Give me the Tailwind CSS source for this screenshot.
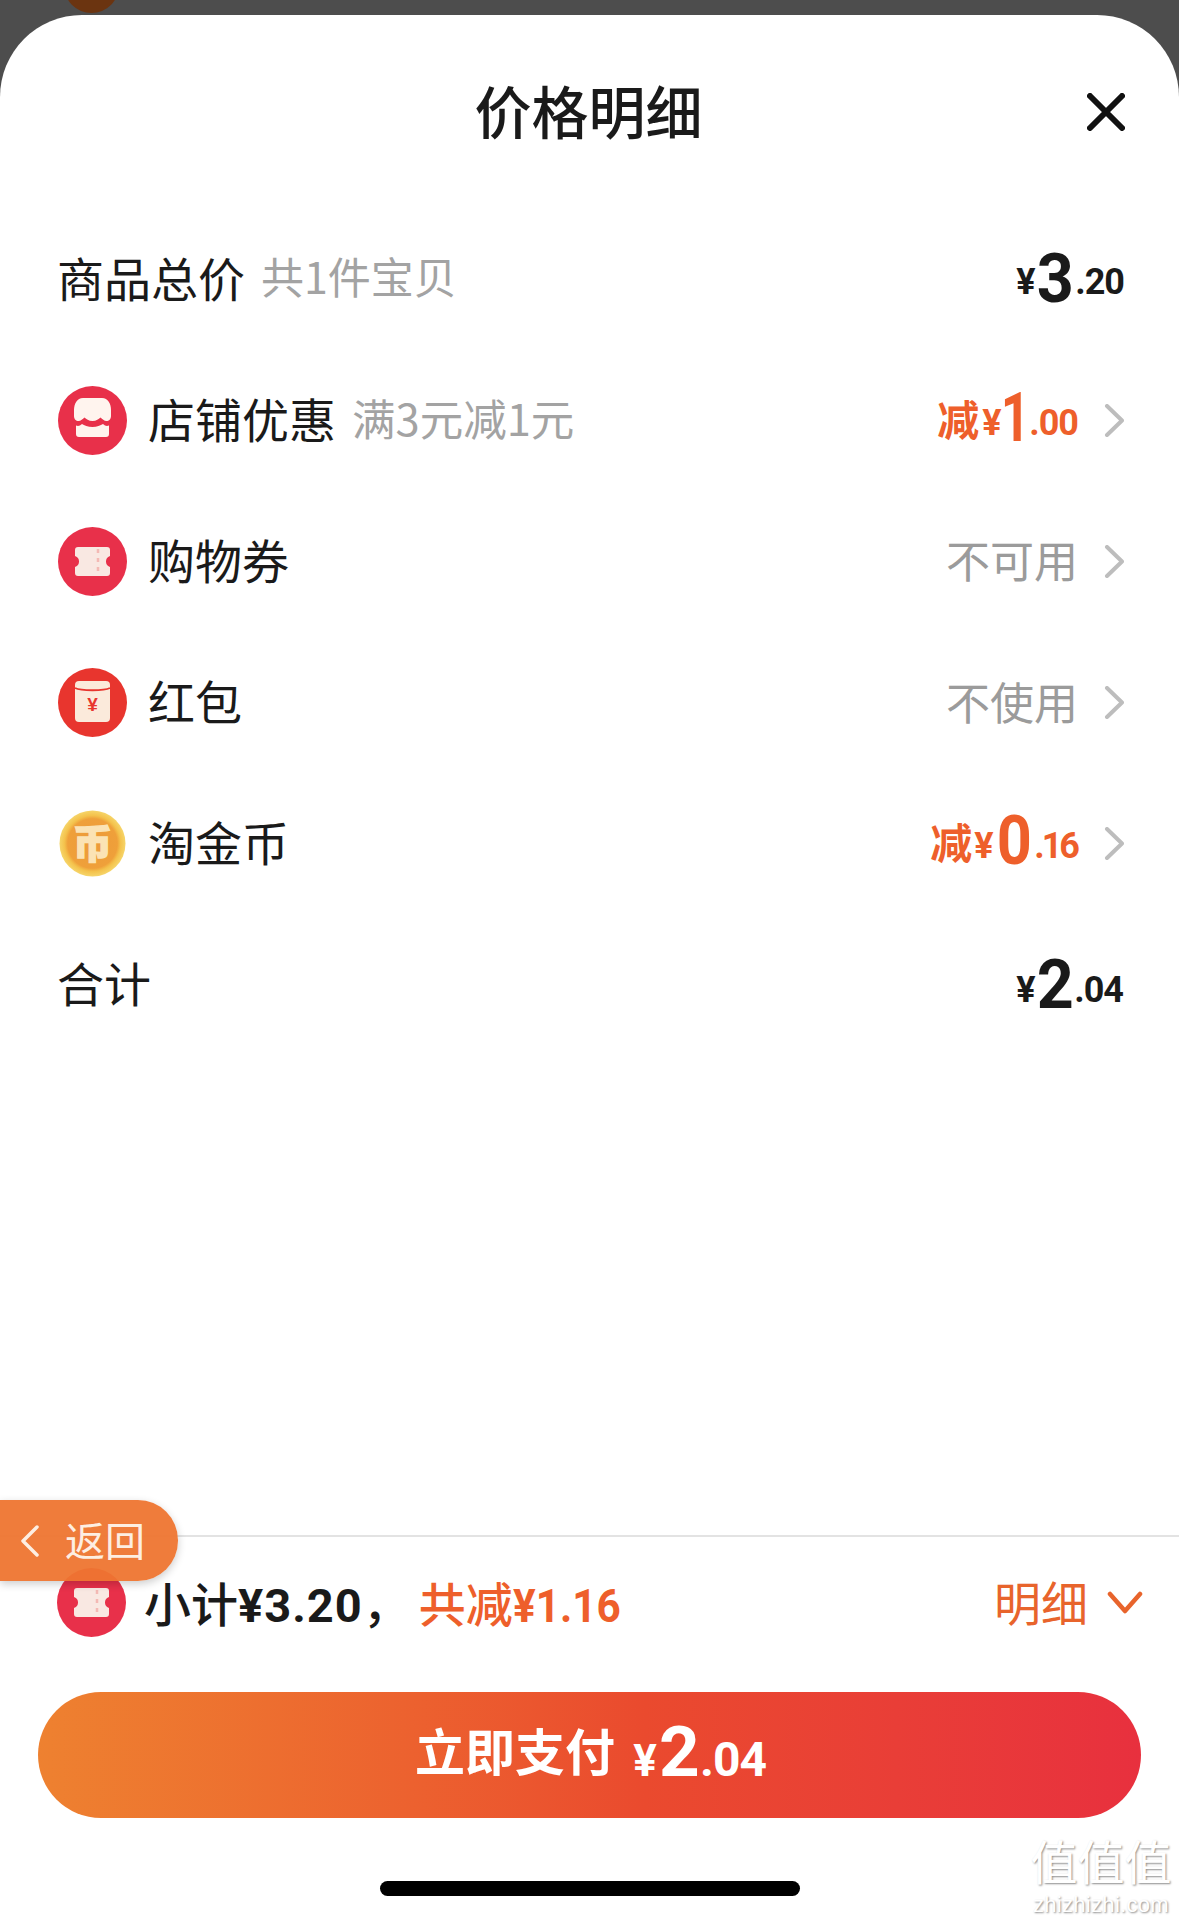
<!DOCTYPE html>
<html lang="zh-CN">
<head>
<meta charset="utf-8">
<script src="https://cdn.jsdelivr.net/npm/@tailwindcss/browser@4"></script>
</head>
<body class="m-0">
<div class="relative w-[1179px] h-[1920px] overflow-hidden bg-[#4d4d4d] font-['Noto_Sans_CJK_SC',sans-serif] text-[#1a1a1a]">
  <div class="absolute left-[64px] top-[-42px] w-[55px] h-[55px] rounded-full bg-[#6b3410]"></div>
  <div class="relative mt-[15px] h-[1905px] rounded-t-[82px] bg-white flex flex-col">
    <!-- header -->
    <header class="h-[194px] grid grid-cols-[1fr_auto_1fr] items-center">
      <div></div>
      <h1 class="text-[57px] leading-none font-medium -translate-y-[3px] -translate-x-[1px]">价格明细</h1>
      <div class="flex justify-end pr-[54px]">
        <svg width="38" height="38" viewBox="0 0 38 38" fill="none" stroke="#111" stroke-width="6" stroke-linecap="round"><path d="M3 3 35 35M35 3 3 35"/></svg>
      </div>
    </header>
    <!-- rows -->
    <section class="flex flex-col px-[58px]">
      <div class="h-[141px] flex items-center justify-between">
        <div class="flex items-center gap-[16px] text-[47px] leading-none -translate-y-[3px] -translate-x-[1px]"><span>商品总价</span><span class="text-[#a3a3a3] text-[43px] -translate-y-[1px]">共1件宝贝</span></div>
        <div class="flex items-baseline mr-[-3px] -translate-y-[1px] font-['Roboto',sans-serif] font-bold leading-none"><span class="w-[19px] text-center text-[36px] -translate-y-[8px]">¥</span><span class="ml-[1px] w-[32px] text-center scale-x-[.95] text-[68px]">3</span><span class="ml-[7px] text-[36px] tracking-[-1px] -translate-y-[8px]">.20</span></div>
      </div>
      <div class="h-[141px] flex items-center justify-between">
        <div class="flex items-center text-[47px] leading-none">
          <svg class="mr-[21px]" width="69" height="69" viewBox="0 0 69 69"><circle cx="34.500" cy="34.500" r="34.500" fill="#e8304a"/><path fill="#fff4ee" d="M25 12h19c6 0 9 6 9 12v6c0 3-2 5-4.500 5s-4-2-6-3.500c-2 1.500-4 3.500-8 3.500s-6-2-8-3.500c-2 1.500-3.500 3.500-6 3.500S16 33 16 30v-6c0-6 3-12 9-12z"/><path fill="#fff4ee" d="M18 39.500c2 1 4 .5 6-1.500 2 1.500 6 3 10.500 3s8-1.500 10.500-3c2 2 4 2.500 6 1.500V48c0 2-1 3-3 3H21c-2 0-3-1-3-3z"/></svg>
          <span class="-translate-y-[3px]">店铺优惠</span><span class="ml-[16px] text-[#a3a3a3] text-[43.5px] -translate-y-[3px]">满3元减1元</span>
        </div>
        <div class="flex items-center mr-[-3px]">
          <div class="flex items-baseline -translate-y-[3px] font-['Roboto',sans-serif] font-bold leading-none text-[#ee5f2b]"><span class="font-['Noto_Sans_CJK_SC',sans-serif] font-bold text-[42px] -translate-y-[5px]">减</span><span class="w-[19px] text-center text-[36px] ml-[3px] -translate-y-[6px]">¥</span><span class="ml-[-3px] w-[22px] text-center scale-x-[.75] text-[68px]">1</span><span class="ml-[9px] text-[36px] tracking-[-1px] -translate-y-[6px]">.00</span></div>
          <svg class="ml-[25px]" width="21" height="33" viewBox="0 0 21 33" fill="none" stroke="#bdbdbd" stroke-width="4" stroke-linecap="round" stroke-linejoin="round"><path d="M4 2 19 16.500 4 31"/></svg>
        </div>
      </div>
      <div class="h-[141px] flex items-center justify-between">
        <div class="flex items-center text-[47px] leading-none">
          <svg class="mr-[21px]" width="69" height="69" viewBox="0 0 69 69"><circle cx="34.500" cy="34.500" r="34.500" fill="#e8304a"/><path fill="#f9e8e2" d="M20 20h29c2 0 3 1 3 3v6c-3 1-4 3-4 5.500s1 4.500 4 5.500v6c0 2-1 3-3 3H20c-2 0-3-1-3-3v-6c3-1 4-3 4-5.500s-1-4.500-4-5.500v-6c0-2 1-3 3-3z"/><path stroke="#f4b9b4" stroke-width="2.500" stroke-dasharray="4 5" d="M40 22v25"/></svg>
          <span class="-translate-y-[3px]">购物券</span>
        </div>
        <div class="flex items-center mr-[-3px]">
          <span class="text-[44px] leading-none text-[#9b9b9b] -translate-y-[3px]">不可用</span>
          <svg class="ml-[25px]" width="21" height="33" viewBox="0 0 21 33" fill="none" stroke="#bdbdbd" stroke-width="4" stroke-linecap="round" stroke-linejoin="round"><path d="M4 2 19 16.500 4 31"/></svg>
        </div>
      </div>
      <div class="h-[141px] flex items-center justify-between">
        <div class="flex items-center text-[47px] leading-none">
          <svg class="mr-[21px]" width="69" height="69" viewBox="0 0 69 69"><circle cx="34.500" cy="34.500" r="34.500" fill="#e8352e"/><rect x="17" y="13" width="35" height="41" rx="4" fill="#fbeadb"/><path d="M17 20c6 3 29 3 35 0" fill="none" stroke="#e8352e" stroke-width="1.800"/><text x="34.500" y="43" text-anchor="middle" font-size="19" font-weight="700" fill="#e8352e" font-family="Liberation Sans">¥</text></svg>
          <span class="-translate-y-[3px]">红包</span>
        </div>
        <div class="flex items-center mr-[-3px]">
          <span class="text-[44px] leading-none text-[#9b9b9b] -translate-y-[2px]">不使用</span>
          <svg class="ml-[25px]" width="21" height="33" viewBox="0 0 21 33" fill="none" stroke="#bdbdbd" stroke-width="4" stroke-linecap="round" stroke-linejoin="round"><path d="M4 2 19 16.500 4 31"/></svg>
        </div>
      </div>
      <div class="h-[141px] flex items-center justify-between">
        <div class="flex items-center text-[47px] leading-none">
          <svg class="mr-[21px]" width="69" height="69" viewBox="0 0 69 69"><defs><radialGradient id="coin"><stop offset="0" stop-color="#ec9a3a"/><stop offset=".75" stop-color="#efa03a"/><stop offset=".85" stop-color="#f4c24c"/><stop offset="1" stop-color="#f6d56a"/></radialGradient></defs><circle cx="34.500" cy="34.500" r="33" fill="url(#coin)"/><text x="34.500" y="49" text-anchor="middle" font-size="39" font-weight="900" fill="#fbe3b4" stroke="#fbe3b4" stroke-width="1.500" font-family="Noto Sans CJK SC">币</text></svg>
          <span class="-translate-y-[3px]">淘金币</span>
        </div>
        <div class="flex items-center mr-[-3px]">
          <div class="flex items-baseline -translate-y-[3px] font-['Roboto',sans-serif] font-bold leading-none text-[#ee5f2b]"><span class="font-['Noto_Sans_CJK_SC',sans-serif] font-bold text-[42px] -translate-y-[5px]">减</span><span class="w-[19px] text-center text-[36px] ml-[2px] -translate-y-[6px]">¥</span><span class="ml-[2px] w-[33px] text-center scale-x-[.9] text-[68px]">0</span><span class="ml-[6px] text-[36px] tracking-[-3px] -translate-y-[6px]">.16</span></div>
          <svg class="ml-[26px]" width="21" height="33" viewBox="0 0 21 33" fill="none" stroke="#bdbdbd" stroke-width="4" stroke-linecap="round" stroke-linejoin="round"><path d="M4 2 19 16.500 4 31"/></svg>
        </div>
      </div>
      <div class="h-[141px] flex items-center justify-between">
        <span class="text-[47px] leading-none -translate-y-[3px] -translate-x-[1px]">合计</span>
        <div class="flex items-baseline mr-[-2px] font-['Roboto',sans-serif] font-bold leading-none"><span class="w-[19px] text-center text-[36px] -translate-y-[6px]">¥</span><span class="ml-[1px] w-[32px] text-center scale-x-[.95] text-[68px]">2</span><span class="ml-[6px] text-[36px] tracking-[-1px] -translate-y-[6px]">.04</span></div>
      </div>
    </section>
    <!-- footer -->
    <footer class="mt-auto flex flex-col">
      <div class="h-[157px] border-t-2 border-[#e3e3e3] pb-[24px] pl-[57px] pr-[36px] flex items-center justify-between">
        <div class="flex items-center">
          <svg class="mr-[18px]" width="69" height="69" viewBox="0 0 69 69"><circle cx="34.500" cy="34.500" r="34.500" fill="#e8304a"/><path fill="#f9e8e2" d="M20 20h29c2 0 3 1 3 3v6c-3 1-4 3-4 5.500s1 4.500 4 5.500v6c0 2-1 3-3 3H20c-2 0-3-1-3-3v-6c3-1 4-3 4-5.500s-1-4.500-4-5.500v-6c0-2 1-3 3-3z"/><path stroke="#f4b9b4" stroke-width="2.500" stroke-dasharray="4 5" d="M40 22v25"/></svg>
          <span class="text-[47px] leading-none font-medium translate-y-[1px]">小计<span class="font-['Roboto',sans-serif] font-bold text-[47px] tracking-[1px]">¥3.20</span>，</span>
          <span class="ml-[9px] text-[47px] leading-none font-medium text-[#ee5f2b] translate-y-[1px]">共减<span class="inline-block origin-left scale-x-[.9] font-['Roboto',sans-serif] font-bold text-[47px]">¥1.16</span></span>
        </div>
        <div class="flex items-center text-[#e8642c]">
          <span class="text-[47px] leading-none -translate-y-[2px] translate-x-[1px]">明细</span>
          <svg class="ml-[20px]" width="36" height="23" viewBox="0 0 36 23" fill="none" stroke="currentColor" stroke-width="4.500" stroke-linecap="round" stroke-linejoin="round"><path d="M3 3 18 20 33 3"/></svg>
        </div>
      </div>
      <button class="mx-[38px] h-[126px] rounded-full bg-gradient-to-r from-[#ee8130] via-[#ea4a2e] via-55% to-[#e8303e] text-white flex items-baseline justify-center pt-[24px] pl-[2px]">
        <span class="text-[50px] leading-none font-bold font-['Noto_Sans_CJK_SC',sans-serif] -translate-y-[5px]">立即支付</span>
        <span class="ml-[18px] flex items-baseline font-['Roboto',sans-serif] font-bold leading-none"><span class="w-[24px] text-center text-[44px]">¥</span><span class="ml-[2px] w-[36px] text-center text-[71px]">2</span><span class="ml-[5px] text-[48px] tracking-[-1px]">.04</span></span>
      </button>
      <div class="mx-auto mt-[63px] mb-[24px] w-[420px] h-[15px] rounded-full bg-black"></div>
    </footer>
    <!-- floating back pill -->
    <div class="absolute left-0 top-[1485px] w-[178px] h-[81px] rounded-r-[40px] bg-[#ee7530]/95 shadow-[0_3px_8px_rgba(0,0,0,0.2)] flex items-center pl-[20px] text-[#fdeee2]">
      <svg width="20" height="32" viewBox="0 0 20 32" fill="none" stroke="currentColor" stroke-width="3.500" stroke-linecap="round" stroke-linejoin="round"><path d="M17 2 3 16l14 14"/></svg>
      <span class="ml-[25px] text-[40px] leading-none -translate-y-[2px]">返回</span>
    </div>
  </div>
  <!-- watermark -->
  <div class="absolute left-[1030px] top-[1838px] w-[142px] flex flex-col items-center text-white [text-shadow:1px_1px_2px_rgba(0,0,0,0.45)]">
    <span class="text-[47px] leading-[52px] h-[52px] font-['Liberation_Sans','Noto_Sans_CJK_SC',sans-serif]">值值值</span>
    <span class="mt-[4px] text-[22px] leading-[22px] font-['Liberation_Sans',sans-serif] tracking-[0.3px]">zhizhizhi.com</span>
  </div>
</div>
</body>
</html>
